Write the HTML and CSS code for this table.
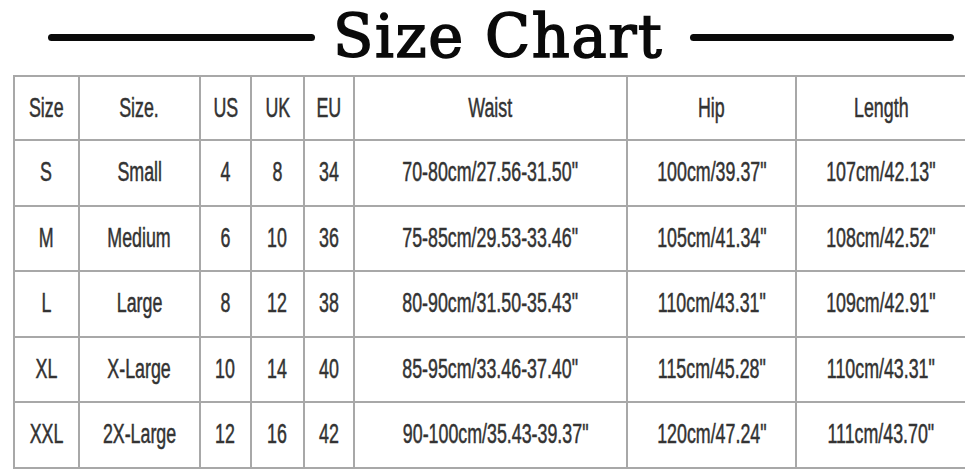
FILE: index.html
```
<!DOCTYPE html>
<html>
<head>
<meta charset="utf-8">
<link rel="stylesheet" href="styles.css">
</head>
<body>
<div class="page">
  <div class="title-row">
    <span class="rule rule-left"></span>
    <h1 class="title">Size Chart</h1>
    <span class="rule rule-right"></span>
  </div>
  <table class="chart">
    <colgroup>
      <col class="c1"><col class="c2"><col class="c3"><col class="c4"><col class="c5"><col class="c6"><col class="c7"><col class="c8">
    </colgroup>
    <tr><td><span>Size</span></td><td><span>Size.</span></td><td><span>US</span></td><td><span>UK</span></td><td><span>EU</span></td><td><span>Waist</span></td><td><span>Hip</span></td><td><span>Length</span></td></tr>
    <tr><td><span>S</span></td><td><span>Small</span></td><td><span>4</span></td><td><span>8</span></td><td><span>34</span></td><td><span>70-80cm/27.56-31.50"</span></td><td><span>100cm/39.37"</span></td><td><span>107cm/42.13"</span></td></tr>
    <tr><td><span>M</span></td><td><span>Medium</span></td><td><span>6</span></td><td><span>10</span></td><td><span>36</span></td><td><span>75-85cm/29.53-33.46"</span></td><td><span>105cm/41.34"</span></td><td><span>108cm/42.52"</span></td></tr>
    <tr><td><span>L</span></td><td><span>Large</span></td><td><span>8</span></td><td><span>12</span></td><td><span>38</span></td><td><span>80-90cm/31.50-35.43"</span></td><td><span>110cm/43.31"</span></td><td><span>109cm/42.91"</span></td></tr>
    <tr><td><span>XL</span></td><td><span>X-Large</span></td><td><span>10</span></td><td><span>14</span></td><td><span>40</span></td><td><span>85-95cm/33.46-37.40"</span></td><td><span>115cm/45.28"</span></td><td><span>110cm/43.31"</span></td></tr>
    <tr><td><span>XXL</span></td><td><span>2X-Large</span></td><td><span>12</span></td><td><span>16</span></td><td><span>42</span></td><td><span>90-100cm/35.43-39.37"</span></td><td><span>120cm/47.24"</span></td><td><span>111cm/43.70"</span></td></tr>
  </table>
</div>
</body>
</html>
```
FILE: styles.css
```
html, body {
  margin: 0;
  padding: 0;
  background: #ffffff;
}
.page {
  width: 978px;
  height: 470px;
  overflow: hidden;
}
.title-row {
  display: flex;
  align-items: center;
  height: 75px;
  padding-left: 48px;
  padding-right: 24px;
}
.rule {
  display: block;
  height: 7px;
  background: #0a0a0a;
  border-radius: 4px;
  margin-top: -1px;
}
.rule-left {
  width: 267px;
}
.rule-right {
  flex: 1;
}
.title {
  margin: -3px 27px 0 18px;
  font-family: "DejaVu Serif", serif;
  font-weight: normal;
  font-size: 59px;
  line-height: 75px;
  color: #0a0a0a;
  -webkit-text-stroke: 1.6px #0a0a0a;
  letter-spacing: 1.6px;
  white-space: nowrap;
}
.chart {
  margin-left: 13px;
  border-collapse: collapse;
  table-layout: fixed;
  width: 951px;
}
.c1 { width: 65px; }
.c2 { width: 121px; }
.c3 { width: 51px; }
.c4 { width: 53px; }
.c5 { width: 50px; }
.c6 { width: 273px; }
.c7 { width: 169px; }
.c8 { width: 169px; }
.chart td {
  border: 2px solid #a8a8a8;
  height: 63.5px;
  padding: 0;
  text-align: center;
  vertical-align: middle;
  font-family: "Liberation Sans", Arial, sans-serif;
  font-size: 27px;
  color: #333333;
  -webkit-text-stroke: 0.5px #333333;
  white-space: nowrap;
}
.chart tr:first-child td {
  height: 62px;
}
.chart td:last-child {
  border-right: none;
}
.chart td span {
  display: inline-block;
  transform: scaleX(0.66);
  transform-origin: center;
}
```
